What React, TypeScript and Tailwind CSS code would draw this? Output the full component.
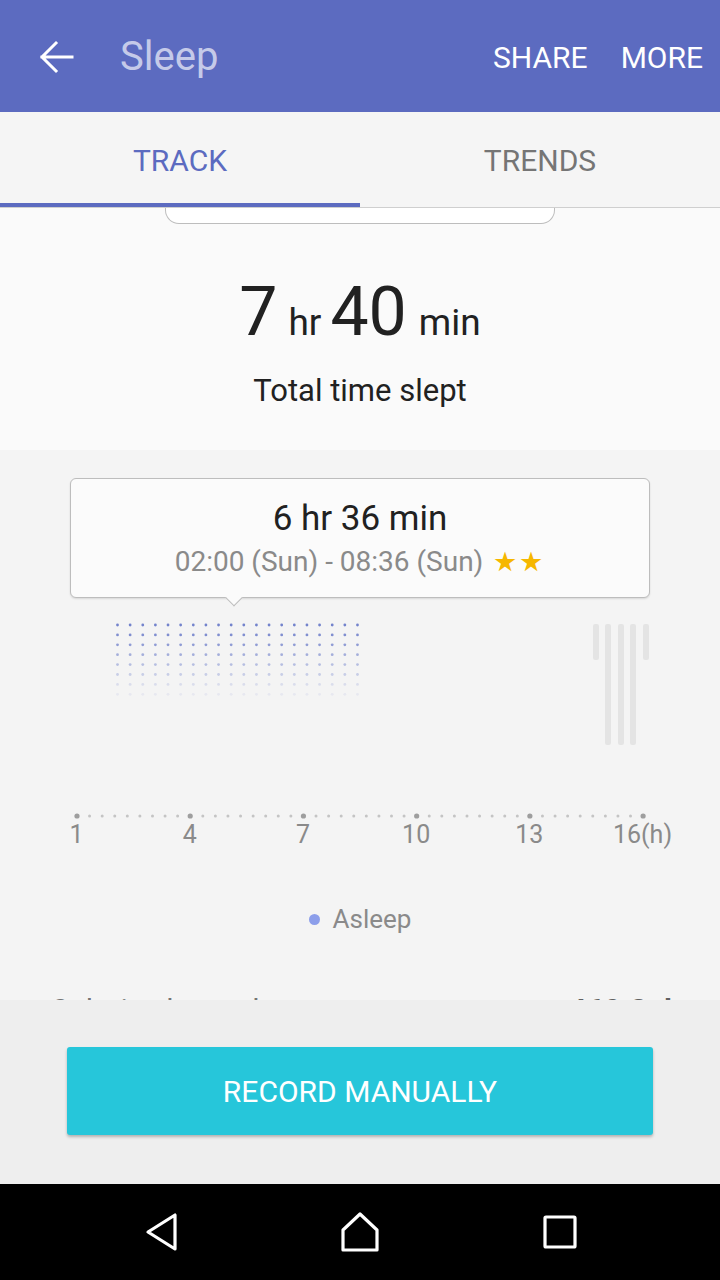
import React from "react";

const AXIS_LABELS = ["1", "4", "7", "10", "13", "16(h)"];

// opacity per row of the asleep dot block, top row first
const DOT_ROWS = [1, 0.9, 0.78, 0.62, 0.48, 0.34, 0.2, 0.1];

const BARS = [
	{ x: 593, h: 36 },
	{ x: 605, h: 121 },
	{ x: 618, h: 121 },
	{ x: 630, h: 121 },
	{ x: 643, h: 36 },
];

const SleepChart: React.FC = () => {
	const top = 20;
	const axisY = 218;
	return (
		<svg width="720" height="224" viewBox="0 0 720 224" className="block">
			{DOT_ROWS.map((op, r) =>
				Array.from({ length: 20 }).map((_, c) => (
					<circle
						key={`${r}-${c}`}
						cx={117.5 + c * 12.63}
						cy={top + 7 + r * 9.9}
						r={1.4}
						fill="#7383cc"
						opacity={op}
					/>
				)),
			)}
			{BARS.map((b) => (
				<rect
					key={b.x}
					x={b.x}
					y={top + 6}
					width={6}
					height={b.h}
					rx={2}
					fill="#e4e4e4"
				/>
			))}
			{Array.from({ length: 46 }).map((_, i) => {
				const major = i % 9 === 0;
				return (
					<circle
						key={i}
						cx={77 + i * 12.58}
						cy={axisY}
						r={major ? 2.6 : 1.5}
						fill={major ? "#9e9e9e" : "#c4c4c4"}
					/>
				);
			})}
		</svg>
	);
};

export default function App() {
	return (
		<div className="w-[720px] h-[1280px] flex flex-col overflow-hidden font-['Roboto',sans-serif]">
			<header className="h-[112px] shrink-0 bg-[#5c6bc0] flex items-center">
				<svg width="112" height="112" viewBox="0 0 112 112" className="shrink-0">
					<path
						d="M72 57 H42 M56 43 L42 57 L56 71"
						fill="none"
						stroke="#ffffff"
						strokeWidth="3"
						strokeLinecap="square"
					/>
				</svg>
				<h1 className="text-[40px] text-[#c5cae9] ml-[8px] mt-[2px]">Sleep</h1>
				<div className="ml-auto flex gap-[33px] pr-[17px] pt-[3px] text-[30px] text-white">
					<span>SHARE</span>
					<span>MORE</span>
				</div>
			</header>

			<nav className="h-[96px] shrink-0 bg-[#f5f5f5] flex border-b border-[#cfcfcf]">
				<div className="w-1/2 flex flex-col">
					<span className="flex-1 flex items-center justify-center text-[30px] text-[#5c6bc0] pt-[6px]">
						TRACK
					</span>
					<div className="h-[4px] bg-[#5c6bc0]" />
				</div>
				<div className="w-1/2 flex items-center justify-center text-[30px] text-[#757575] pt-[2px]">
					TRENDS
				</div>
			</nav>

			<main className="h-[792px] shrink-0 overflow-hidden flex flex-col">
				<section className="h-[242px] shrink-0 bg-[#fafafa] flex flex-col items-center">
					<div className="w-[390px] h-[16px] border-x border-b border-[#bdbdbd] rounded-b-[14px] bg-white" />
					<div className="mt-[54px] flex items-baseline text-[#212121] leading-none">
						<span className="text-[68px]">7</span>
						<span className="text-[37px] ml-[11px]">hr</span>
						<span className="text-[68px] ml-[9px]">40</span>
						<span className="text-[37px] ml-[12px]">min</span>
					</div>
					<p className="mt-[22px] text-[31px] text-[#212121]">Total time slept</p>
				</section>

				<section className="flex-1 bg-[#f4f4f4] flex flex-col">
					<div className="mt-[28px] mx-[70px] relative h-[120px] bg-[#fbfbfb] border border-[#bdbdbd] rounded-[6px] shadow-[0_1px_2px_rgba(0,0,0,0.12)] flex flex-col items-center pt-[19px]">
						<span className="text-[35px] leading-[42px] text-[#212121]">6 hr 36 min</span>
						<span className="mt-[5px] text-[28px] leading-[34px] text-[#8a8a8a] flex items-center">
							02:00 (Sun) - 08:36 (Sun)
							<span className="ml-[10px] text-[27px] text-[#f6b700] tracking-[2px]">★★</span>
						</span>
						<div className="absolute left-[157px] -bottom-[7px] w-[12px] h-[12px] rotate-45 bg-[#fbfbfb] border-r border-b border-[#bdbdbd]" />
					</div>

					<SleepChart />

					<div className="flex px-[20px] -mt-[2px] text-[25px] leading-[30px] text-[#8a8a8a]">
						{AXIS_LABELS.map((l) => (
							<span key={l} className="w-[113.2px] text-center">
								{l}
							</span>
						))}
					</div>

					<div className="mt-[50px] flex items-center justify-center gap-[13px] text-[26px] text-[#8a8a8a]">
						<span className="w-[11px] h-[11px] rounded-full bg-[#8c9eea]" />
						<span>Asleep</span>
					</div>

					<div className="mt-[48px] flex justify-between pl-[50px] pr-[48px] text-[30px]">
						<span className="text-[#757575]">Calories burned</span>
						<span className="font-bold text-[#616161]">460 Cal</span>
					</div>
				</section>
			</main>

			<div className="h-[184px] shrink-0 bg-[#eeeeee] flex items-center justify-center">
				<button className="w-[586px] h-[88px] -mt-[2px] bg-[#26c6da] rounded-[3px] shadow-[0_2px_3px_rgba(0,0,0,0.25)] text-white text-[30px]">
					RECORD MANUALLY
				</button>
			</div>

			<div className="flex-1 bg-black flex items-center justify-center">
				<div className="w-[200px] flex justify-center">
					<svg width="40" height="40" viewBox="0 0 40 40">
						<path d="M35 3 V37 L8 20 Z" fill="none" stroke="#fff" strokeWidth="3.2" strokeLinejoin="round" />
					</svg>
				</div>
				<div className="w-[200px] flex justify-center">
					<svg width="40" height="42" viewBox="0 0 40 42">
						<path d="M3 39 V19 L20 3 L37 19 V39 Z" fill="none" stroke="#fff" strokeWidth="3.2" strokeLinejoin="round" />
					</svg>
				</div>
				<div className="w-[200px] flex justify-center">
					<svg width="36" height="36" viewBox="0 0 36 36">
						<rect x="3" y="3" width="30" height="30" rx="1" fill="none" stroke="#fff" strokeWidth="3.2" />
					</svg>
				</div>
			</div>
		</div>
	);
}
